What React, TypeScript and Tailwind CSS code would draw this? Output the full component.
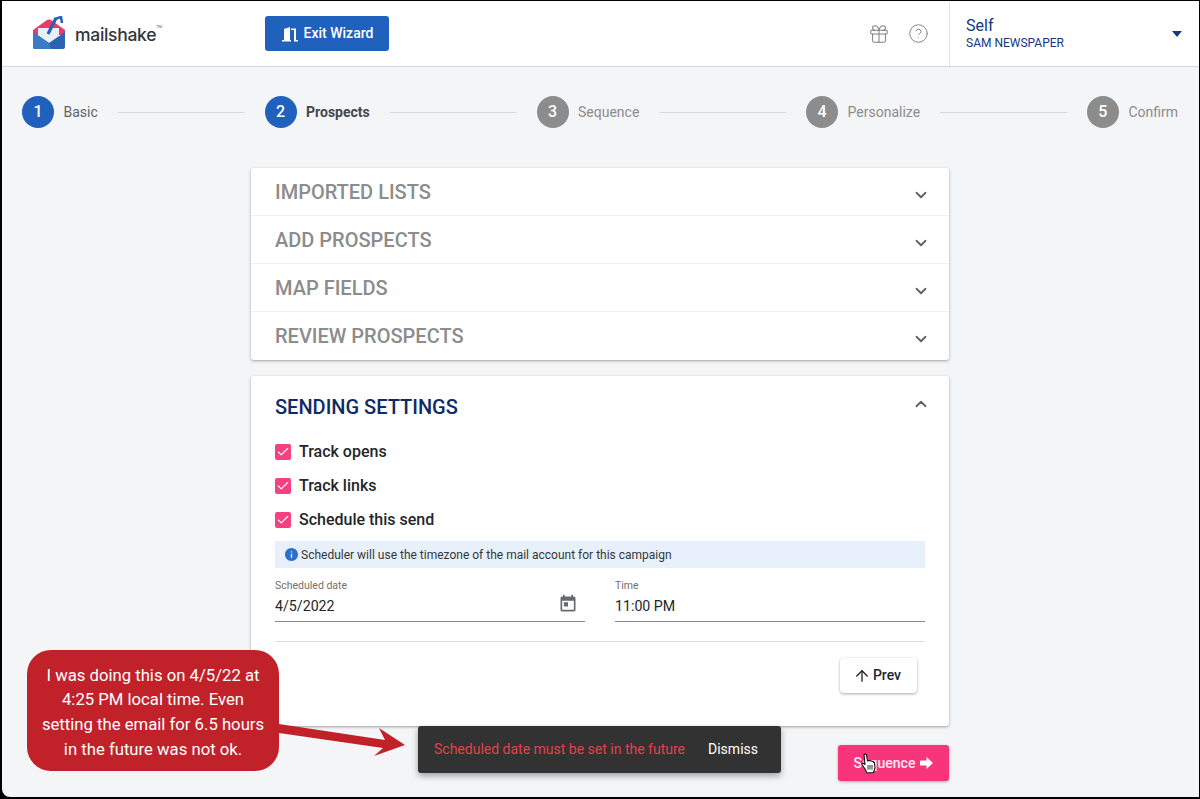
import React from 'react';
import { ChevronDown, ChevronUp, Gift, CircleHelp, ArrowUp, Check } from 'lucide-react';

const steps = [
  { n: 1, label: 'Basic', state: 'done' },
  { n: 2, label: 'Prospects', state: 'active' },
  { n: 3, label: 'Sequence', state: 'todo' },
  { n: 4, label: 'Personalize', state: 'todo' },
  { n: 5, label: 'Confirm', state: 'todo' },
];

function Logo() {
  return (
    <div className="flex items-center gap-[8px]">
      <svg width="35" height="35" viewBox="0 0 35 35">
        <path d="M1 14 L15 4 Q17 3 19 4 L33 14 L33 19 L1 19 Z" fill="#ee3a68" />
        <path d="M6 12 L27 12 L27 24 L17 29 L6 24 Z" fill="#eaf0f8" />
        <path d="M16 18 L24 2" stroke="#2a62b4" strokeWidth="3.2" fill="none" />
        <path d="M23 3 L29 1 L30 7" stroke="#2a62b4" strokeWidth="2.6" fill="none" />
        <path d="M1 16 L17 27 L33 16 L33 31 Q33 33 31 33 L3 33 Q1 33 1 31 Z" fill="#2a62b4" />
        <path d="M1 16 L17 27 L19 33 L3 33 Q1 33 1 31 Z" fill="#3d7ac6" />
      </svg>
      <span className="mt-[2px] flex items-start font-['Inter',sans-serif] text-[17.5px] font-medium tracking-[-0.3px] text-[#33363a] leading-none">
        mailshake
        <span className="mt-[-1px] text-[4px] text-[#888]">TM</span>
      </span>
    </div>
  );
}

function AccordionRow({ title, last }: { title: string; last?: boolean }) {
  return (
    <div className={`flex h-[48px] items-center justify-between pl-[24px] pr-[19px] ${last ? '' : 'border-b border-[#f0f0f0]'}`}>
      <span className="text-[20px] font-medium uppercase text-[#8c8c8c]">{title}</span>
      <ChevronDown size={18} strokeWidth={2.4} className="mt-[6px] text-[#5f6368]" />
    </div>
  );
}

function CheckRow({ label }: { label: string }) {
  return (
    <div className="flex h-[34px] items-center gap-[8px]">
      <span className="flex h-[16px] w-[16px] items-center justify-center rounded-[2px] bg-[#f5417f]">
        <Check size={14} strokeWidth={2} className="text-white" />
      </span>
      <span className="text-[16px] font-medium text-[#23262a]">{label}</span>
    </div>
  );
}

export default function App() {
  return (
    <div className="h-[799px] w-[1200px] overflow-hidden bg-black pb-[2px] pl-[2px] pr-[1px] pt-[1px] font-['Roboto',sans-serif]">
      <div className="relative h-full overflow-hidden rounded-bl-[8px] bg-[#f3f5f7]">
        <header className="flex h-[66px] items-center border-b border-[#d5d8dc] bg-white">
          <div className="ml-[30px] w-[233px]"><Logo /></div>
          <button className="flex h-[35px] w-[124px] items-center justify-center gap-[5px] rounded-[3px] bg-[#1f61bd] text-[14px] font-medium text-white">
            <svg width="18" height="16" viewBox="0 0 18 16" fill="currentColor">
              <path d="M1 14 H3 V3 L9 1 V14 H10 V15.5 H1 Z" />
              <path d="M10 2.5 H15 V14 H17 V15.5 H13 V4 H10 Z" />
            </svg>
            Exit Wizard
          </button>
          <div className="ml-auto flex items-center gap-[18px] pr-[20px] text-[#808080]">
            <Gift size={22} strokeWidth={1.1} />
            <CircleHelp size={21} strokeWidth={1.1} />
          </div>
          <div className="flex h-full w-[250px] items-center justify-between border-l border-[#dbe6f3] pl-[16px] pr-[17px] text-[#13397f]">
            <div>
              <div className="text-[16px] leading-[19px]">Self</div>
              <div className="text-[12px] leading-[16px]">SAM NEWSPAPER</div>
            </div>
            <span className="h-0 w-0 border-x-[5.5px] border-t-[6px] border-x-transparent border-t-[#13397f]" />
          </div>
        </header>

        <nav className="flex h-[90px] items-center pl-[20px] pr-[21px]">
          {steps.map((s, i) => (
            <React.Fragment key={s.n}>
              {i > 0 && <div className="mx-[20px] h-px flex-1 bg-[#d5d8dc]" />}
              <div className="flex items-center gap-[9.5px]">
                <span className={`flex h-[32px] w-[32px] items-center justify-center rounded-full text-[16px] font-medium text-white ${s.state === 'todo' ? 'bg-[#8c8c8c]' : 'bg-[#1f61bd]'}`}>{s.n}</span>
                <span className={`text-[14px] ${s.state === 'active' ? 'font-bold text-[#43474d]' : s.state === 'done' ? 'text-[#5f6368]' : 'text-[#8c8c8c]'}`}>{s.label}</span>
              </div>
            </React.Fragment>
          ))}
        </nav>

        <main className="ml-[249px] mt-[11px] w-[698px]">
          <section className="rounded-[3px] bg-white shadow-[0_1px_3px_rgba(0,0,0,0.35)]">
            <AccordionRow title="Imported Lists" />
            <AccordionRow title="Add Prospects" />
            <AccordionRow title="Map Fields" />
            <AccordionRow title="Review Prospects" last />
          </section>

          <section className="mt-[16px] h-[350px] rounded-[3px] bg-white px-[24px] shadow-[0_1px_3px_rgba(0,0,0,0.35)]">
            <div className="flex h-[59px] items-center justify-between">
              <span className="mt-[3px] text-[20px] font-medium text-[#0d2c66]">SENDING SETTINGS</span>
              <ChevronUp size={18} strokeWidth={2.4} className="mb-[3px] mr-[-5px] text-[#5f6368]" />
            </div>
            <CheckRow label="Track opens" />
            <CheckRow label="Track links" />
            <CheckRow label="Schedule this send" />
            <div className="mt-[4px] flex h-[27px] items-center gap-[3px] bg-[#e8f1fb] pl-[10px] text-[12px] text-[#33373c]">
              <svg width="13" height="13" viewBox="2 2 20 20" fill="#2a6fc9">
                <path d="M12 2C6.48 2 2 6.48 2 12s4.48 10 10 10 10-4.48 10-10S17.52 2 12 2zm1 15h-2v-6h2v6zm0-8h-2V7h2v2z" />
              </svg>
              Scheduler will use the timezone of the mail account for this campaign
            </div>
            <div className="mt-[12px] flex gap-[30px]">
              <div className="h-[42px] w-[310px] border-b border-[#8c8c8c]">
                <div className="text-[10.5px] leading-[12px] text-[#6f6f6f]">Scheduled date</div>
                <div className="flex items-center justify-between pr-[7px]">
                  <span className="mt-[3px] text-[14.2px] leading-[22px] text-[#23262a]">4/5/2022</span>
                  <svg width="20" height="20" viewBox="0 0 24 24" fill="#666a6e" className="mt-[-2px]">
                    <path d="M19 3h-1V1h-2v2H8V1H6v2H5c-1.11 0-1.99.9-1.99 2L3 19c0 1.1.89 2 2 2h14c1.1 0 2-.9 2-2V5c0-1.1-.9-2-2-2zm0 16H5V8h14v11zM7 10h5v5H7z" />
                  </svg>
                </div>
              </div>
              <div className="h-[42px] w-[310px] border-b border-[#8c8c8c]">
                <div className="text-[10.5px] leading-[12px] text-[#6f6f6f]">Time</div>
                <div className="mt-[3px] text-[14.2px] leading-[22px] text-[#23262a]">11:00 PM</div>
              </div>
            </div>
            <div className="mt-[19px] h-px bg-[#dedede]" />
            <div className="mt-[16px] flex justify-end pr-[8px]">
              <button className="flex h-[35px] w-[77px] items-center justify-center gap-[2px] rounded-[4px] bg-white pr-[3px] text-[14px] font-medium text-[#23262a] shadow-[0_1px_3px_rgba(0,0,0,0.35)]">
                <ArrowUp size={18} strokeWidth={1.8} />
                Prev
              </button>
            </div>
          </section>

          <div className="mt-[19px] flex justify-end">
            <button className="flex h-[36px] w-[111px] items-center justify-center gap-[5px] rounded-[3px] bg-[#f8357a] text-[14px] font-medium text-white/90 shadow-[0_1px_3px_rgba(0,0,0,0.3)]">
              Sequence
              <svg width="13" height="12" viewBox="0 0 13 12" fill="white">
                <path d="M0 3.5 H6.5 V0 L13 6 L6.5 12 V8.5 H0 Z" />
              </svg>
            </button>
          </div>
        </main>

        <div className="absolute left-[416px] top-[725px] flex h-[47px] w-[363px] items-center rounded-[3px] bg-[#323232] pl-[16px] text-[14px] shadow-[0_3px_6px_rgba(0,0,0,0.35)]">
          <span className="text-[#e5404a]">Scheduled date must be set in the future</span>
          <span className="ml-[23px] text-white">Dismiss</span>
        </div>

        <div className="absolute left-[25px] top-[649px] flex h-[121px] w-[252px] items-center justify-center rounded-[24px] bg-[#c1222a] pt-[5px] text-center text-[16.7px] leading-[24.7px] text-white">
          <div>
            I was doing this on 4/5/22 at<br />
            4:25 PM local time. Even<br />
            setting the email for 6.5 hours<br />
            in the future was not ok.
          </div>
        </div>

        <svg className="absolute left-[276px] top-[720px]" width="130" height="40" viewBox="0 0 130 40">
          <path d="M1 3 L107 19 L101 7 L127 24 L96 35 L105 27 L1 12 Z" fill="#c1222a" />
        </svg>

        <svg className="absolute left-[859px] top-[752px]" width="15" height="21" viewBox="0 0 15 21">
          <path d="M3 1.5 Q4.5 0.5 5.5 2 L6.5 8 L8 7.5 L10 8 L12 8.5 L13.5 10 L14 15 L12.5 19.5 L6 20 L4 16 L1 11.5 Q0.5 10 2 10 L4 11.5 Z" fill="white" stroke="#111" strokeWidth="1.1" strokeLinejoin="round" />
          <path d="M7 12 V16.5 M9 12 V16.5 M11 12 V16.5" stroke="#111" strokeWidth="0.9" />
        </svg>
      </div>
    </div>
  );
}
